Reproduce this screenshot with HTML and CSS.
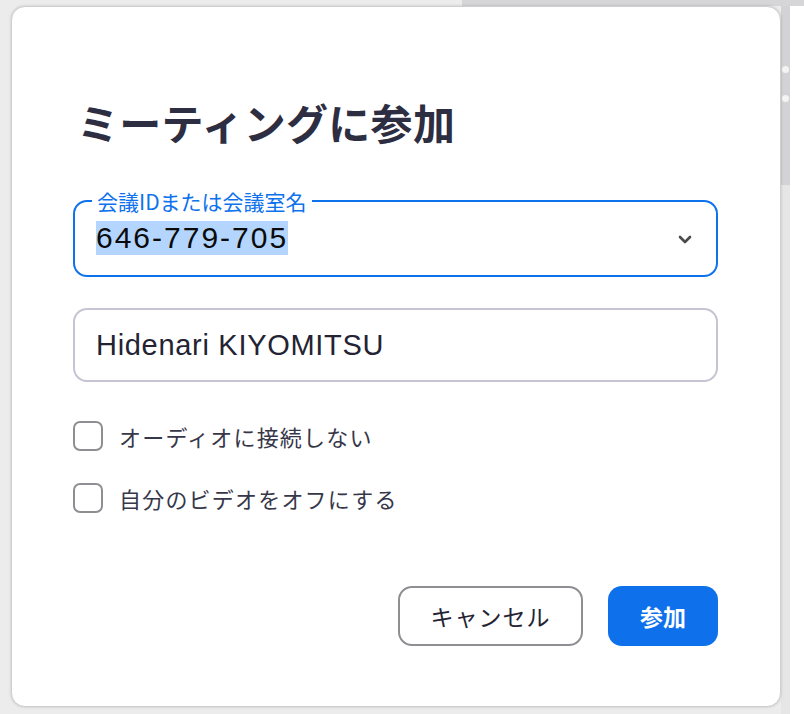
FILE: index.html
```html
<!DOCTYPE html>
<html lang="ja">
<head>
<meta charset="utf-8">
<link rel="stylesheet" href="styles.css">
</head>
<body>
<div class="dots"><span class="dot"></span><span class="dot"></span></div>
<div class="dialog">
  <h1 class="title">ミーティングに参加</h1>
  <fieldset class="field field-active">
    <legend class="field-label">会議IDまたは会議室名</legend>
    <div class="field-row">
      <span class="value selected">646-779-705</span>
      <svg class="chevron" width="14" height="9" viewBox="0 0 14 9"><polyline points="2,2 7,7 12,2" fill="none" stroke="#4a4a4a" stroke-width="2.6" stroke-linecap="round" stroke-linejoin="round"/></svg>
    </div>
  </fieldset>
  <div class="field field-plain">
    <span class="value name">Hidenari KIYOMITSU</span>
  </div>
  <div class="checks">
    <label class="check"><span class="box"></span><span class="check-text">オーディオに接続しない</span></label>
    <label class="check"><span class="box"></span><span class="check-text">自分のビデオをオフにする</span></label>
  </div>
  <div class="actions">
    <button class="btn btn-cancel">キャンセル</button>
    <button class="btn btn-join">参加</button>
  </div>
</div>
</body>
</html>
```

FILE: styles.css
```css
html, body {
  margin: 0;
  padding: 0;
}
body {
  width: 804px;
  height: 714px;
  overflow: hidden;
  position: relative;
  font-family: "Liberation Sans", "Noto Sans CJK JP", sans-serif;
  background:
    linear-gradient(#d6d6d8, #d6d6d8) 462px 0 / 342px 6px no-repeat,
    linear-gradient(#d3d3d5, #d3d3d5) 781px 0 / 9px 185px no-repeat,
    linear-gradient(#e6e6e6, #e6e6e6) 781px 185px / 9px 529px no-repeat,
    linear-gradient(#ffffff, #ffffff) 790px 0 / 14px 714px no-repeat,
    #ececec;
  padding-top: 6px;
  padding-left: 11px;
  box-sizing: border-box;
}
.dots {
  position: absolute;
  left: 782px;
  top: 66px;
  display: flex;
  flex-direction: column;
  gap: 22px;
}
.dot {
  width: 7px;
  height: 7px;
  border-radius: 50%;
  background: #f4f4f4;
}
.dialog {
  width: 770px;
  height: 701px;
  box-sizing: border-box;
  background: #fff;
  border: 1px solid #cfcfcf;
  border-radius: 14px;
  box-shadow: 0 0 3px rgba(0, 0, 0, 0.18);
  padding: 90px 62px 0 61px;
  display: flex;
  flex-direction: column;
}
.title {
  margin: 0 0 42px 4px;
  font-family: "Noto Sans CJK JP", sans-serif;
  font-size: 42px;
  line-height: 50px;
  font-weight: 700;
  color: #2e2e42;
  letter-spacing: 0.3px;
}
.field {
  margin: 0;
  box-sizing: border-box;
  border-radius: 14px;
  min-width: 0;
}
.field-active {
  border: 2px solid #0e72ed;
  padding: 0 24px 20px 21px;
}
.field-label {
  padding: 0 5px;
  margin-left: -4px;
  font-family: "Noto Sans CJK JP", sans-serif;
  font-size: 21px;
  line-height: 24px;
  color: #0e72ed;
}
.field-row {
  display: flex;
  align-items: center;
  justify-content: space-between;
  margin-top: 8px;
}
.value {
  font-size: 30px;
  line-height: 34px;
  color: #0b0b0b;
}
.selected {
  background: #b4d6fe;
  letter-spacing: 2px;
}
.chevron {
  margin-top: 3px;
}
.field-plain {
  margin-top: 31px;
  height: 74px;
  border: 2px solid #c6c4d2;
  padding: 0 21px;
  display: flex;
  align-items: center;
}
.name {
  color: #232333;
  font-size: 29px;
  letter-spacing: 0.7px;
}
.checks {
  margin-top: 39px;
  display: flex;
  flex-direction: column;
  gap: 32px;
}
.check {
  display: flex;
  align-items: center;
  gap: 16px;
  height: 30px;
}
.box {
  width: 30px;
  height: 30px;
  box-sizing: border-box;
  border: 2px solid #8e8e93;
  border-radius: 7px;
}
.check-text {
  font-family: "Noto Sans CJK JP", sans-serif;
  font-size: 22px;
  color: #37374a;
  letter-spacing: 1.2px;
}
.actions {
  margin-top: 73px;
  display: flex;
  justify-content: flex-end;
  gap: 25px;
}
.btn {
  height: 60px;
  border-radius: 14px;
  font-family: "Noto Sans CJK JP", sans-serif;
  font-size: 23px;
  box-sizing: border-box;
  cursor: pointer;
}
.btn-cancel {
  width: 185px;
  background: #fff;
  border: 2px solid #8e8e93;
  color: #232333;
  letter-spacing: 1px;
}
.btn-join {
  width: 110px;
  background: #0e71eb;
  border: none;
  color: #fff;
  font-weight: 700;
}
```
